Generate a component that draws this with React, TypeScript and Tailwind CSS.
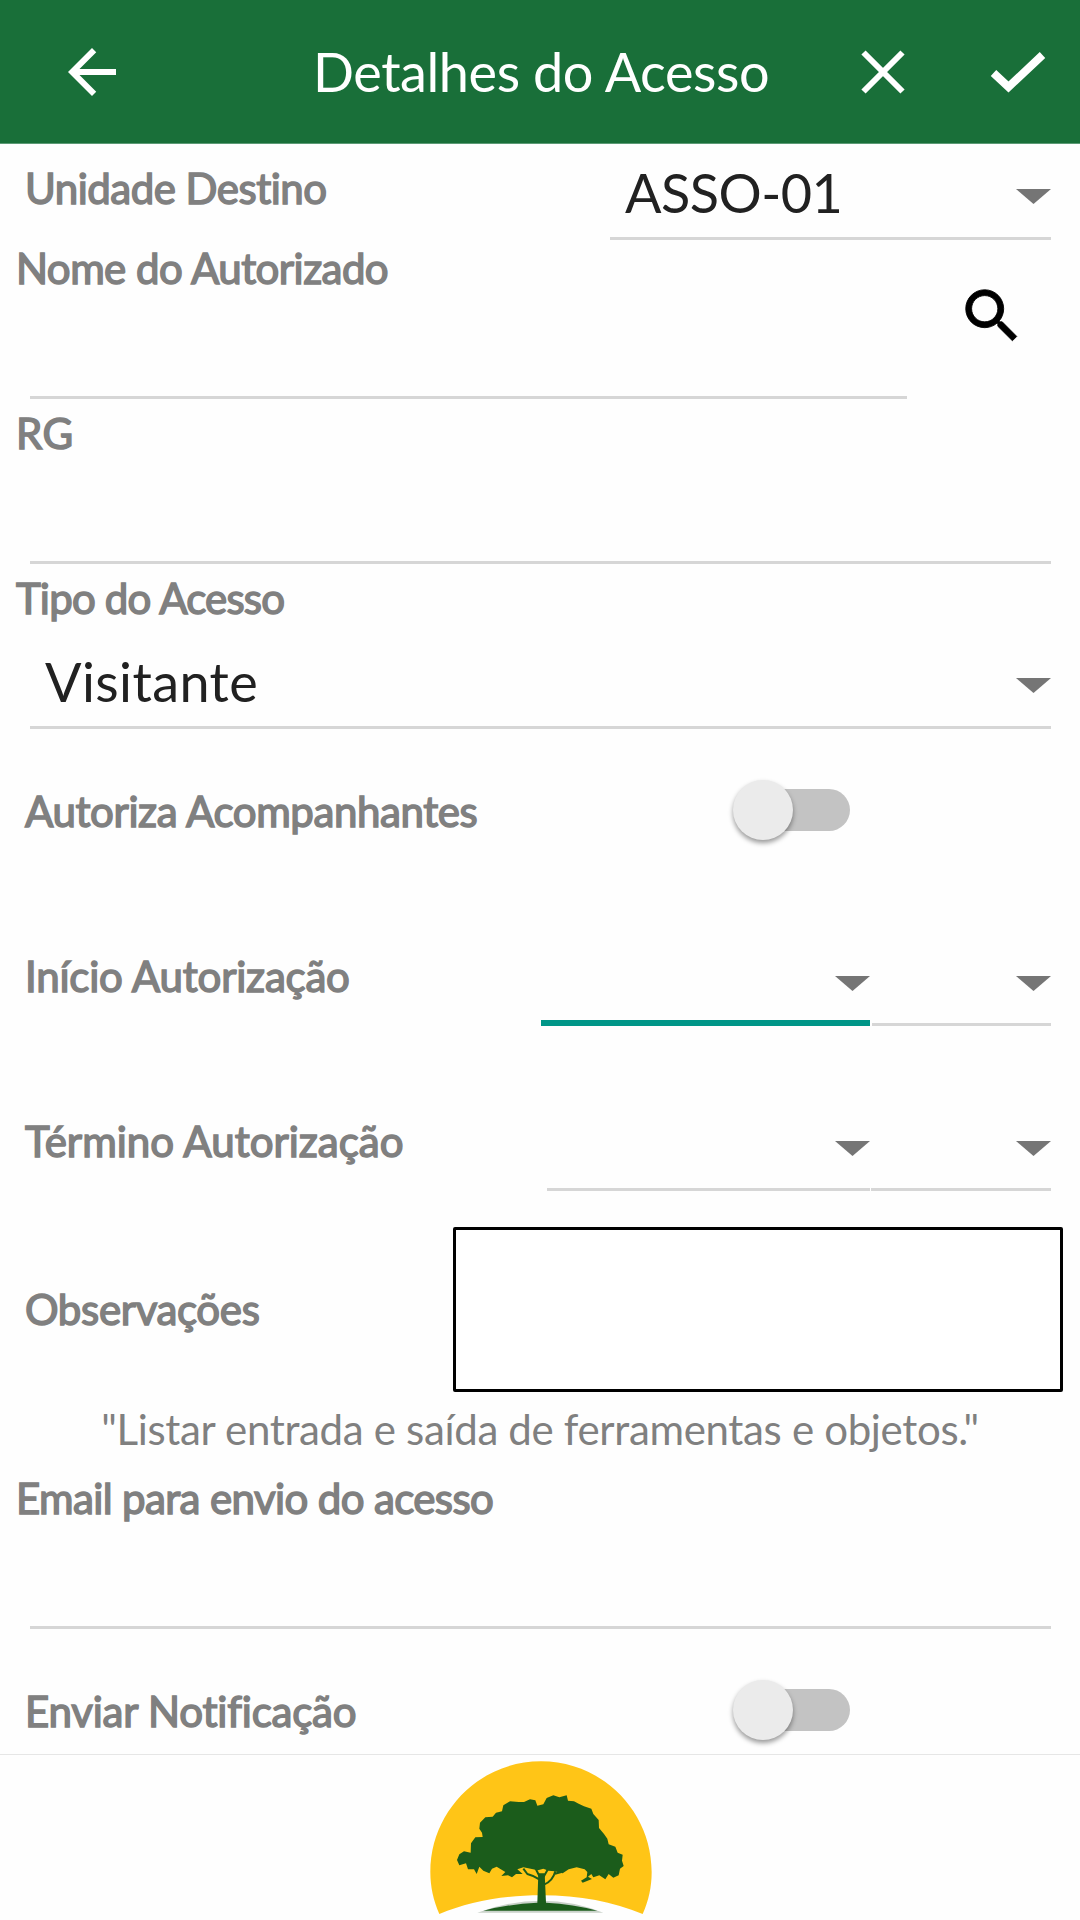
import clsx from 'clsx';
import type { ReactNode } from 'react';

type LabelProps = {
  children: ReactNode;
  className?: string;
};

function Label({ children, className }: LabelProps) {
  return (
    <span
      className={clsx(
        'block text-[42px] leading-[50px] whitespace-nowrap text-[#808080] [-webkit-text-stroke:1.5px_#808080]',
        className,
      )}
    >
      {children}
    </span>
  );
}

function Caret() {
  return (
    <svg viewBox="0 0 35 15" className="h-[15px] w-[35px] fill-[#757575]">
      <path d="M0 0h35L17.5 15z" />
    </svg>
  );
}

function Switch() {
  return (
    <div className="flex h-[60px] w-[118px] items-center rounded-full">
      <div className="ml-[9px] flex h-[42px] w-[109px] items-center rounded-full bg-[#c3c3c3]">
        <div className="-ml-[8px] size-[60px] shrink-0 rounded-full bg-[#ebebeb] shadow-[0_3px_5px_rgba(0,0,0,0.4)]" />
      </div>
    </div>
  );
}

function Logo() {
  return (
    <svg viewBox="0 45 840 495" className="h-[165px] w-[280px]">
      <path
        fill="#ffc517"
        d="M118 522C100 482 91 440 91 396C91 213 240 64 423 64S755 213 755 396C755 440 746 482 728 522C640 486 540 466 423 466S206 486 118 522Z"
      />
      <path fill="#c9d1c9" d="M232 518Q330 482 425 482T610 518Z" />
      <path
        fill="#1b5c1b"
        d="M250 512Q330 492 412 488L415 400H434L438 488Q520 492 592 512Z"
      />
      <path
        fill="#1b5c1b"
        d="M171 360L178 343L192 334L212 338L213 310L226 292L248 291L246 278L238 266L240 248L256 232L278 230L288 218L306 214L310 196L330 184L356 186L372 186L390 178L406 181L412 197L430 193L440 174L460 166L478 172L500 166L504 182L522 184L536 191L552 199L574 206L580 222L596 240L597 264L612 282L622 296L626 313L646 320L653 338L668 344L666 362L671 378L660 386L656 406L640 413L626 402L616 418L598 406L580 412L574 402L564 410L576 417L548 428L543 422L560 412L562 396L554 388L530 382L506 388L488 400L464 394L446 392L430 386L414 391L392 386L370 382L352 388L368 402L348 402L336 412L324 406L304 408L316 396L290 380L276 386L268 400L250 392L238 380L230 402L222 388L204 388L198 370L178 376Z"
      />
      <path
        fill="none"
        stroke="#1b5c1b"
        strokeWidth="6"
        d="M418 418Q404 408 382 402L370 386M432 434Q458 424 466 394M424 420L406 384M430 412L446 384M462 402L484 396"
      />
    </svg>
  );
}

export default function App() {
  return (
    <div className="flex h-[1920px] w-[1080px] flex-col overflow-hidden bg-[#fefefe] font-['Lato',sans-serif] [font-variant-ligatures:none]">
      <header className="flex h-[144px] shrink-0 items-center border-b border-[#5c9a75] bg-[#196f39] text-white">
        <svg viewBox="0 0 24 24" className="ml-[56px] size-[72px] fill-current">
          <path d="M20 11H7.83l5.59-5.59L12 4l-8 8 8 8 1.41-1.41L7.83 13H20v-2z" />
        </svg>
        <h1 className="ml-[185px] w-[548px] text-[54px] leading-[64px] tracking-[-0.42px] whitespace-nowrap">
          Detalhes do Acesso
        </h1>
        <svg
          viewBox="0 0 44 44"
          className="size-[44px] fill-none stroke-current stroke-[6]"
        >
          <path d="M2.5 2.5L41.5 41.5M41.5 2.5L2.5 41.5" />
        </svg>
        <svg
          viewBox="0 0 56 42"
          className="ml-[85px] h-[42px] w-[56px] fill-none stroke-current stroke-[8]"
        >
          <path d="M3.5 22L18.5 36L52.500 4" />
        </svg>
      </header>

      <main className="flex h-[1610px] shrink-0 flex-col">
        <div className="flex h-[96px] shrink-0">
          <div className="w-[585px] pt-[19px] pl-[25px]">
            <Label className="tracking-[-0.5px]">Unidade Destino</Label>
          </div>
          <div className="ml-[25px] flex w-[441px] justify-between border-b-[3px] border-[#d6d6d6] pl-[15px]">
            <span className="pt-[17px] text-[54px] leading-[64px] tracking-[-0.55px] text-[#212121]">
              ASSO-01
            </span>
            <div className="pt-[45px]">
              <Caret />
            </div>
          </div>
        </div>

        <div className="flex h-[159px] shrink-0">
          <div className="flex w-[907px] flex-col">
            <div className="pt-[3px] pl-[16px]">
              <Label className="tracking-[-0.55px]">Nome do Autorizado</Label>
            </div>
            <div className="mt-auto ml-[30px] h-[3px] bg-[#d6d6d6]" />
          </div>
          <svg
            viewBox="0 0 24 24"
            className="mt-[41px] ml-[50px] size-[70px] stroke-black stroke-[0.3]"
          >
            <path d="M15.5 14h-.79l-.28-.27C15.41 12.59 16 11.11 16 9.5 16 5.91 13.09 3 9.5 3S3 5.91 3 9.5 5.91 16 9.5 16c1.61 0 3.09-.59 4.23-1.57l.27.28v.79l5 4.99L20.49 19l-4.99-5zm-6 0C7.01 14 5 11.99 5 9.5S7.01 5 9.5 5 14 7.01 14 9.5 11.99 14 9.5 14z" />
          </svg>
        </div>

        <div className="flex h-[165px] shrink-0 flex-col">
          <div className="pt-[9px] pl-[16px]">
            <Label className="tracking-[0.6px]">RG</Label>
          </div>
          <div className="mt-auto mr-[29px] ml-[30px] h-[3px] bg-[#d6d6d6]" />
        </div>

        <div className="flex h-[165px] shrink-0 flex-col">
          <div className="pt-[9px] pl-[16px]">
            <Label className="tracking-[-0.8px]">Tipo do Acesso</Label>
          </div>
          <div className="mt-auto mr-[29px] ml-[30px] flex h-[92px] justify-between border-b-[3px] border-[#d6d6d6] pl-[15px]">
            <span className="pt-[13px] text-[54px] leading-[64px] tracking-[0.4px] text-[#212121]">
              Visitante
            </span>
            <div className="pt-[41px]">
              <Caret />
            </div>
          </div>
        </div>

        <div className="flex h-[165px] shrink-0 items-start pl-[25px]">
          <div className="w-[707px] pt-[57px]">
            <Label className="tracking-[-0.4px]">Autoriza Acompanhantes</Label>
          </div>
          <div className="pt-[51px]">
            <Switch />
          </div>
        </div>

        <div className="flex h-[132px] shrink-0 pl-[25px]">
          <div className="w-[516px] pt-[57px]">
            <Label className="tracking-[-0.2px]">Início Autorização</Label>
          </div>
          <div className="flex w-[329px] justify-end border-b-[6px] border-[#009688] pt-[82px]">
            <Caret />
          </div>
          <div className="ml-[2px] flex w-[179px] justify-end border-b-[3px] border-[#d6d6d6] pt-[82px]">
            <Caret />
          </div>
        </div>

        <div className="flex h-[165px] shrink-0 pl-[25px]">
          <div className="w-[522px] pt-[90px]">
            <Label>Término Autorização</Label>
          </div>
          <div className="flex w-[323px] justify-end border-b-[3px] border-[#d6d6d6] pt-[115px]">
            <Caret />
          </div>
          <div className="ml-[1px] flex w-[180px] justify-end border-b-[3px] border-[#d6d6d6] pt-[115px]">
            <Caret />
          </div>
        </div>

        <div className="mt-[36px] flex h-[165px] shrink-0 pl-[25px]">
          <div className="w-[428px] pt-[57px]">
            <Label className="tracking-[-0.35px]">Observações</Label>
          </div>
          <div className="w-[610px] rounded-[2px] border-[3px] border-black bg-white" />
        </div>

        <p className="mt-[12px] text-center text-[42px] leading-[50px] tracking-[-0.33px] whitespace-nowrap text-[#808080]">
          "Listar entrada e saída de ferramentas e objetos."
        </p>

        <div className="flex h-[175px] shrink-0 flex-col">
          <div className="pt-[19px] pl-[16px]">
            <Label className="tracking-[-0.62px]">
              Email para envio do acesso
            </Label>
          </div>
          <div className="mt-auto mr-[29px] ml-[30px] h-[3px] bg-[#d6d6d6]" />
        </div>

        <div className="flex h-[125px] shrink-0 items-start pl-[25px]">
          <div className="w-[707px] pt-[57px]">
            <Label className="tracking-[-0.2px]">Enviar Notificação</Label>
          </div>
          <div className="pt-[51px]">
            <Switch />
          </div>
        </div>
      </main>

      <footer className="flex h-[166px] shrink-0 justify-center border-t border-[#e6e6e6]">
        <Logo />
      </footer>
    </div>
  );
}
